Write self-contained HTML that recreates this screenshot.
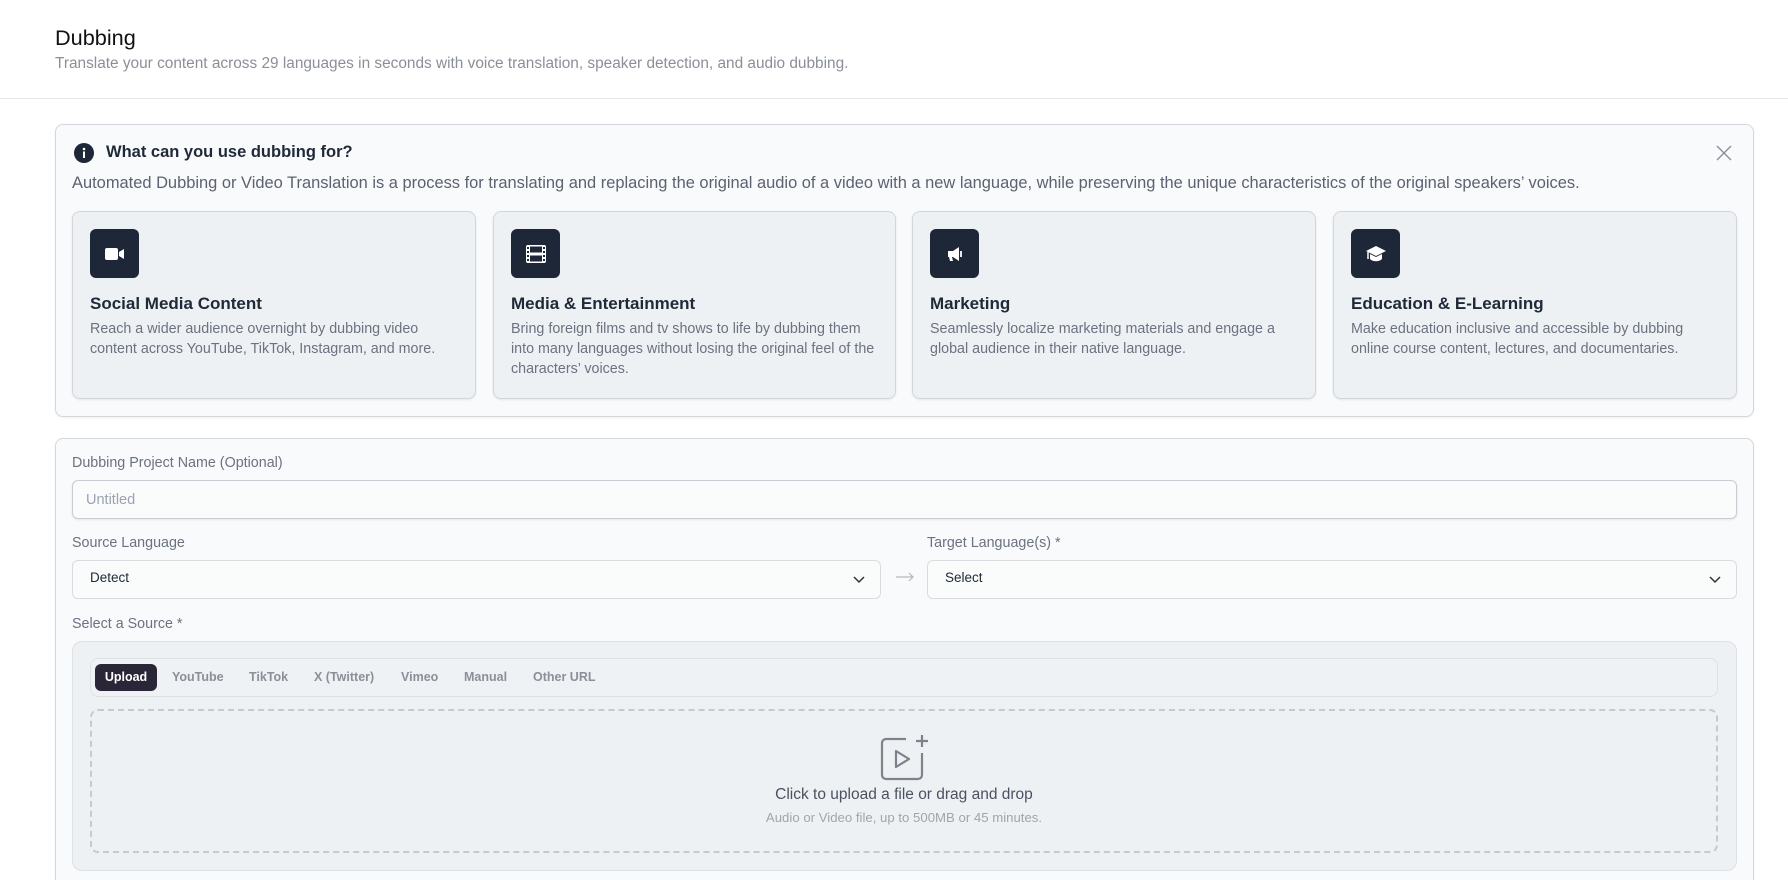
<!DOCTYPE html>
<html><head><meta charset="utf-8"><style>
*{box-sizing:border-box;margin:0;padding:0}
html,body{width:1788px;height:880px;overflow:hidden}
body{background:#fff;font-family:"Liberation Sans",Arial,sans-serif;color:#1f2937;position:relative}
.abs{position:absolute}
.card{border:1px solid #d4d7dc;border-radius:8px;background:#f9fafb;box-shadow:0 1px 2px rgba(0,0,0,.06)}
.sub{position:absolute;top:211px;height:188px;border:1px solid #d2d6dc;border-radius:8px;background:#eef1f4;box-shadow:0 1px 2px rgba(0,0,0,.08)}
.ib{position:absolute;left:17px;top:17px;width:49px;height:49px;border-radius:6px;background:#1e2738;display:flex;align-items:center;justify-content:center}
.sub h3{position:absolute;left:17px;top:82px;font-size:17px;font-weight:600;color:#1f2937}
.sub p{position:absolute;left:17px;top:107px;right:14px;font-size:14.3px;line-height:20px;color:#6b7280}
.lbl{position:absolute;font-size:14.3px;color:#6b7280}
.inp{position:absolute;border:1px solid #d8dbe0;border-radius:6px;background:#fafbfb}
.tab{position:absolute;top:670px;font-size:12.5px;font-weight:600;color:#8b8f98}
</style></head><body>
<div class="abs" style="left:55px;top:25px;font-size:21.7px;font-weight:500;color:#111">Dubbing</div>
<div class="abs" style="left:55px;top:55px;font-size:15.4px;color:#8a8f98">Translate your content across 29 languages in seconds with voice translation, speaker detection, and audio dubbing.</div>
<div class="abs" style="left:0;top:98px;width:1788px;height:1px;background:#e5e7eb"></div>

<div class="card abs" style="left:55px;top:124px;width:1699px;height:293px"></div>
<svg class="abs" style="left:74px;top:143px" width="20" height="20" viewBox="0 0 20 20"><circle cx="10" cy="10" r="10" fill="#1e2738"/><circle cx="10" cy="6" r="1.3" fill="#fff"/><rect x="9" y="8.5" width="2" height="6.5" fill="#fff"/></svg>
<div class="abs" style="left:106px;top:143px;font-size:16.5px;font-weight:600;color:#1f2937">What can you use dubbing for?</div>
<svg class="abs" style="left:1716px;top:145px" width="16" height="16" viewBox="0 0 16 16"><path d="M1 1L15 15M15 1L1 15" stroke="#8a8f98" stroke-width="1.4"/></svg>
<div class="abs" style="left:72px;top:174px;font-size:16.45px;color:#5b6270">Automated Dubbing or Video Translation is a process for translating and replacing the original audio of a video with a new language, while preserving the unique characteristics of the original speakers’ voices.</div>

<div class="sub" style="left:72px;width:404px"><div class="ib"><svg width="22" height="16" viewBox="0 0 22 16"><rect x="1" y="2" width="13" height="12" rx="2" fill="#fff"/><path d="M15 6l5-3v10l-5-3z" fill="#fff"/></svg></div><h3>Social Media Content</h3><p>Reach a wider audience overnight by dubbing video content across YouTube, TikTok, Instagram, and more.</p></div>
<div class="sub" style="left:493px;width:403px"><div class="ib"><svg width="22" height="20" viewBox="0 0 22 20"><rect x="1" y="1" width="20" height="18" rx="2" fill="#fff"/><rect x="5" y="2.5" width="12" height="6" fill="#1e2738"/><rect x="5" y="11.5" width="12" height="6" fill="#1e2738"/><g fill="#1e2738"><rect x="2" y="3" width="2" height="2"/><rect x="2" y="7" width="2" height="2"/><rect x="2" y="11" width="2" height="2"/><rect x="2" y="15" width="2" height="2"/><rect x="18" y="3" width="2" height="2"/><rect x="18" y="7" width="2" height="2"/><rect x="18" y="11" width="2" height="2"/><rect x="18" y="15" width="2" height="2"/></g></svg></div><h3>Media &amp; Entertainment</h3><p>Bring foreign films and tv shows to life by dubbing them into many languages without losing the original feel of the characters’ voices.</p></div>
<div class="sub" style="left:912px;width:404px"><div class="ib"><svg width="20" height="20" viewBox="0 0 20 20"><path d="M3 7h5l6-4v14l-6-4H7l1 4H5l-1-4H3z" fill="#fff"/><path d="M16 7v6" stroke="#fff" stroke-width="1.8"/></svg></div><h3>Marketing</h3><p>Seamlessly localize marketing materials and engage a global audience in their native language.</p></div>
<div class="sub" style="left:1333px;width:404px"><div class="ib"><svg width="22" height="20" viewBox="0 0 22 20"><path d="M11 2L21 7 11 12 1 7z" fill="#fff"/><path d="M5 10v5c3 3 9 3 12 0v-5l-6 3z" fill="#fff"/><path d="M3 8v7" stroke="#fff" stroke-width="1.5"/></svg></div><h3>Education &amp; E-Learning</h3><p>Make education inclusive and accessible by dubbing online course content, lectures, and documentaries.</p></div>

<div class="card abs" style="left:55px;top:438px;width:1699px;height:480px"></div>
<div class="lbl" style="left:72px;top:455px">Dubbing Project Name (Optional)</div>
<div class="inp" style="left:72px;top:480px;width:1665px;height:39px;border-color:#c9cdd3;box-shadow:0 1px 2px rgba(0,0,0,.08)"><span class="abs" style="left:13px;top:11px;font-size:14.5px;color:#9ca3af">Untitled</span></div>
<div class="lbl" style="left:72px;top:535px">Source Language</div>
<div class="lbl" style="left:927px;top:535px">Target Language(s) *</div>
<div class="inp" style="left:72px;top:560px;width:809px;height:39px"><span class="abs" style="left:17px;top:9px;font-size:13.5px;color:#1f2937">Detect</span><svg class="abs" style="right:15px;top:15px" width="12" height="8" viewBox="0 0 12 8"><path d="M1 1l5 5 5-5" stroke="#333" stroke-width="1.5" fill="none"/></svg></div>
<svg class="abs" style="left:895px;top:572px" width="20" height="10" viewBox="0 0 20 10"><path d="M1 5h17M14 1l4 4-4 4" stroke="#b5b9c0" stroke-width="1.2" fill="none"/></svg>
<div class="inp" style="left:927px;top:560px;width:810px;height:39px"><span class="abs" style="left:17px;top:9px;font-size:13.5px;color:#1f2937">Select</span><svg class="abs" style="right:15px;top:15px" width="12" height="8" viewBox="0 0 12 8"><path d="M1 1l5 5 5-5" stroke="#333" stroke-width="1.5" fill="none"/></svg></div>
<div class="lbl" style="left:72px;top:616px">Select a Source *</div>
<div class="abs" style="left:72px;top:641px;width:1665px;height:230px;border:1px solid #dde1e6;border-radius:10px;background:#eef1f4"></div>
<div class="abs" style="left:90px;top:658px;width:1628px;height:39px;border:1px solid #dde1e6;border-radius:8px;background:#eff2f5"></div>
<div class="abs" style="left:95px;top:664px;width:62px;height:27px;border-radius:6px;background:#2a2638;color:#fff;font-size:12.5px;font-weight:700;text-align:center;line-height:27px">Upload</div>
<div class="tab" style="left:172px">YouTube</div>
<div class="tab" style="left:249px">TikTok</div>
<div class="tab" style="left:314px">X (Twitter)</div>
<div class="tab" style="left:401px">Vimeo</div>
<div class="tab" style="left:464px">Manual</div>
<div class="tab" style="left:533px">Other URL</div>
<div class="abs" style="left:90px;top:709px;width:1628px;height:144px;border:2px dashed #c5c9d0;border-radius:8px"></div>
<svg class="abs" style="left:878px;top:733px" width="54" height="50" viewBox="0 0 54 50"><path d="M28 6H8a4 4 0 0 0-4 4v32a4 4 0 0 0 4 4h32a4 4 0 0 0 4-4V20" stroke="#7d828b" stroke-width="2.2" fill="none"/><path d="M18 18v16l13-8z" stroke="#7d828b" stroke-width="2.2" fill="none" stroke-linejoin="round"/><path d="M44 2v12M38 8h12" stroke="#7d828b" stroke-width="2.2"/></svg>
<div class="abs" style="left:0;width:1808px;top:786px;text-align:center;font-size:15.5px;color:#4b5160">Click to upload a file or drag and drop</div>
<div class="abs" style="left:0;width:1808px;top:810px;text-align:center;font-size:13.2px;color:#a0a5ad">Audio or Video file, up to 500MB or 45 minutes.</div>
</body></html>
